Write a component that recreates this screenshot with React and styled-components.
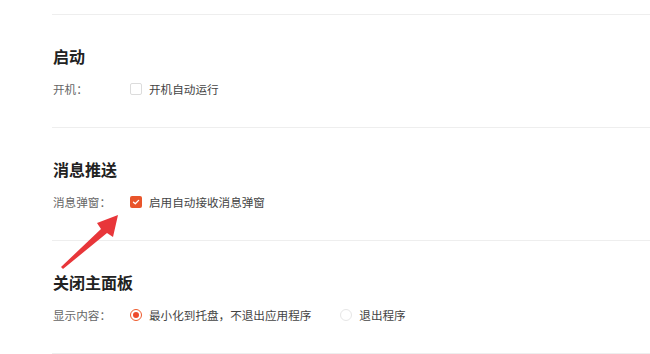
import styled, { createGlobalStyle } from "styled-components";

const GlobalStyle = createGlobalStyle`
  html, body {
    margin: 0;
    padding: 0;
    background: #fff;
  }
  body {
    font-family: "Noto Sans CJK SC", "Noto Sans", sans-serif;
  }
`;

const Page = styled.div({
  position: "relative",
  paddingTop: "14px",
  paddingLeft: "52px",
  width: "650px",
  height: "354px",
  boxSizing: "border-box",
  overflow: "hidden",
});

const Section = styled.section({
  borderTop: "1px solid #eeeeee",
  height: "113px",
  boxSizing: "border-box",
  paddingTop: "31px",
  paddingLeft: "1px",
});

const LastLine = styled.div({
  borderTop: "1px solid #eeeeee",
});

const Heading = styled.h2({
  margin: 0,
  fontSize: "16px",
  lineHeight: "20px",
  fontWeight: 700,
  color: "#222",
});

const Row = styled.div({
  display: "flex",
  alignItems: "center",
  marginTop: "14px",
  height: "18px",
  fontSize: "11.6px",
});

const Label = styled.span({
  width: "77px",
  color: "#666",
});

const Option = styled.label({
  display: "flex",
  alignItems: "center",
  gap: "7px",
  color: "#444",
  marginRight: "29px",
});

const Box = styled.span(({ checked }) => ({
  width: "12px",
  height: "12px",
  boxSizing: "border-box",
  borderRadius: "2px",
  border: checked ? "none" : "1px solid #dcdcdc",
  background: checked ? "#e9552b" : "#fff",
  display: "flex",
  alignItems: "center",
  justifyContent: "center",
}));

const Radio = styled.span(({ checked }) => ({
  width: "12px",
  height: "12px",
  boxSizing: "border-box",
  borderRadius: "50%",
  border: checked ? "1px solid #ee5a2c" : "1px solid #e6e6e6",
  display: "flex",
  alignItems: "center",
  justifyContent: "center",
  "&::after": checked
    ? {
        content: '""',
        width: "6px",
        height: "6px",
        borderRadius: "50%",
        background: "#ee4a2c",
      }
    : {},
}));

const Arrow = styled.svg({
  position: "absolute",
  left: 0,
  top: 0,
  pointerEvents: "none",
});

const Check = () => (
  <svg width="8" height="8" viewBox="0 0 8 8">
    <path d="M1.5 4.2 L3.3 5.8 L6.6 2.4" fill="none" stroke="#fff" strokeWidth="1.3" strokeLinecap="round" strokeLinejoin="round" />
  </svg>
);

export default function App() {
  return (
    <Page>
      <GlobalStyle />
      <Section>
        <Heading>启动</Heading>
        <Row>
          <Label>开机：</Label>
          <Option>
            <Box />
            开机自动运行
          </Option>
        </Row>
      </Section>
      <Section>
        <Heading>消息推送</Heading>
        <Row>
          <Label>消息弹窗：</Label>
          <Option>
            <Box checked>
              <Check />
            </Box>
            启用自动接收消息弹窗
          </Option>
        </Row>
      </Section>
      <Section>
        <Heading>关闭主面板</Heading>
        <Row>
          <Label>显示内容：</Label>
          <Option>
            <Radio checked />
            最小化到托盘，不退出应用程序
          </Option>
          <Option>
            <Radio />
            退出程序
          </Option>
        </Row>
      </Section>
      <LastLine />
      <Arrow width="650" height="354" viewBox="0 0 650 354">
        <path d="M61 267 L101 229 L97 223 L118 215 L113 237 L107 233 L63 269 Z" fill="#e8363a" />
      </Arrow>
    </Page>
  );
}
